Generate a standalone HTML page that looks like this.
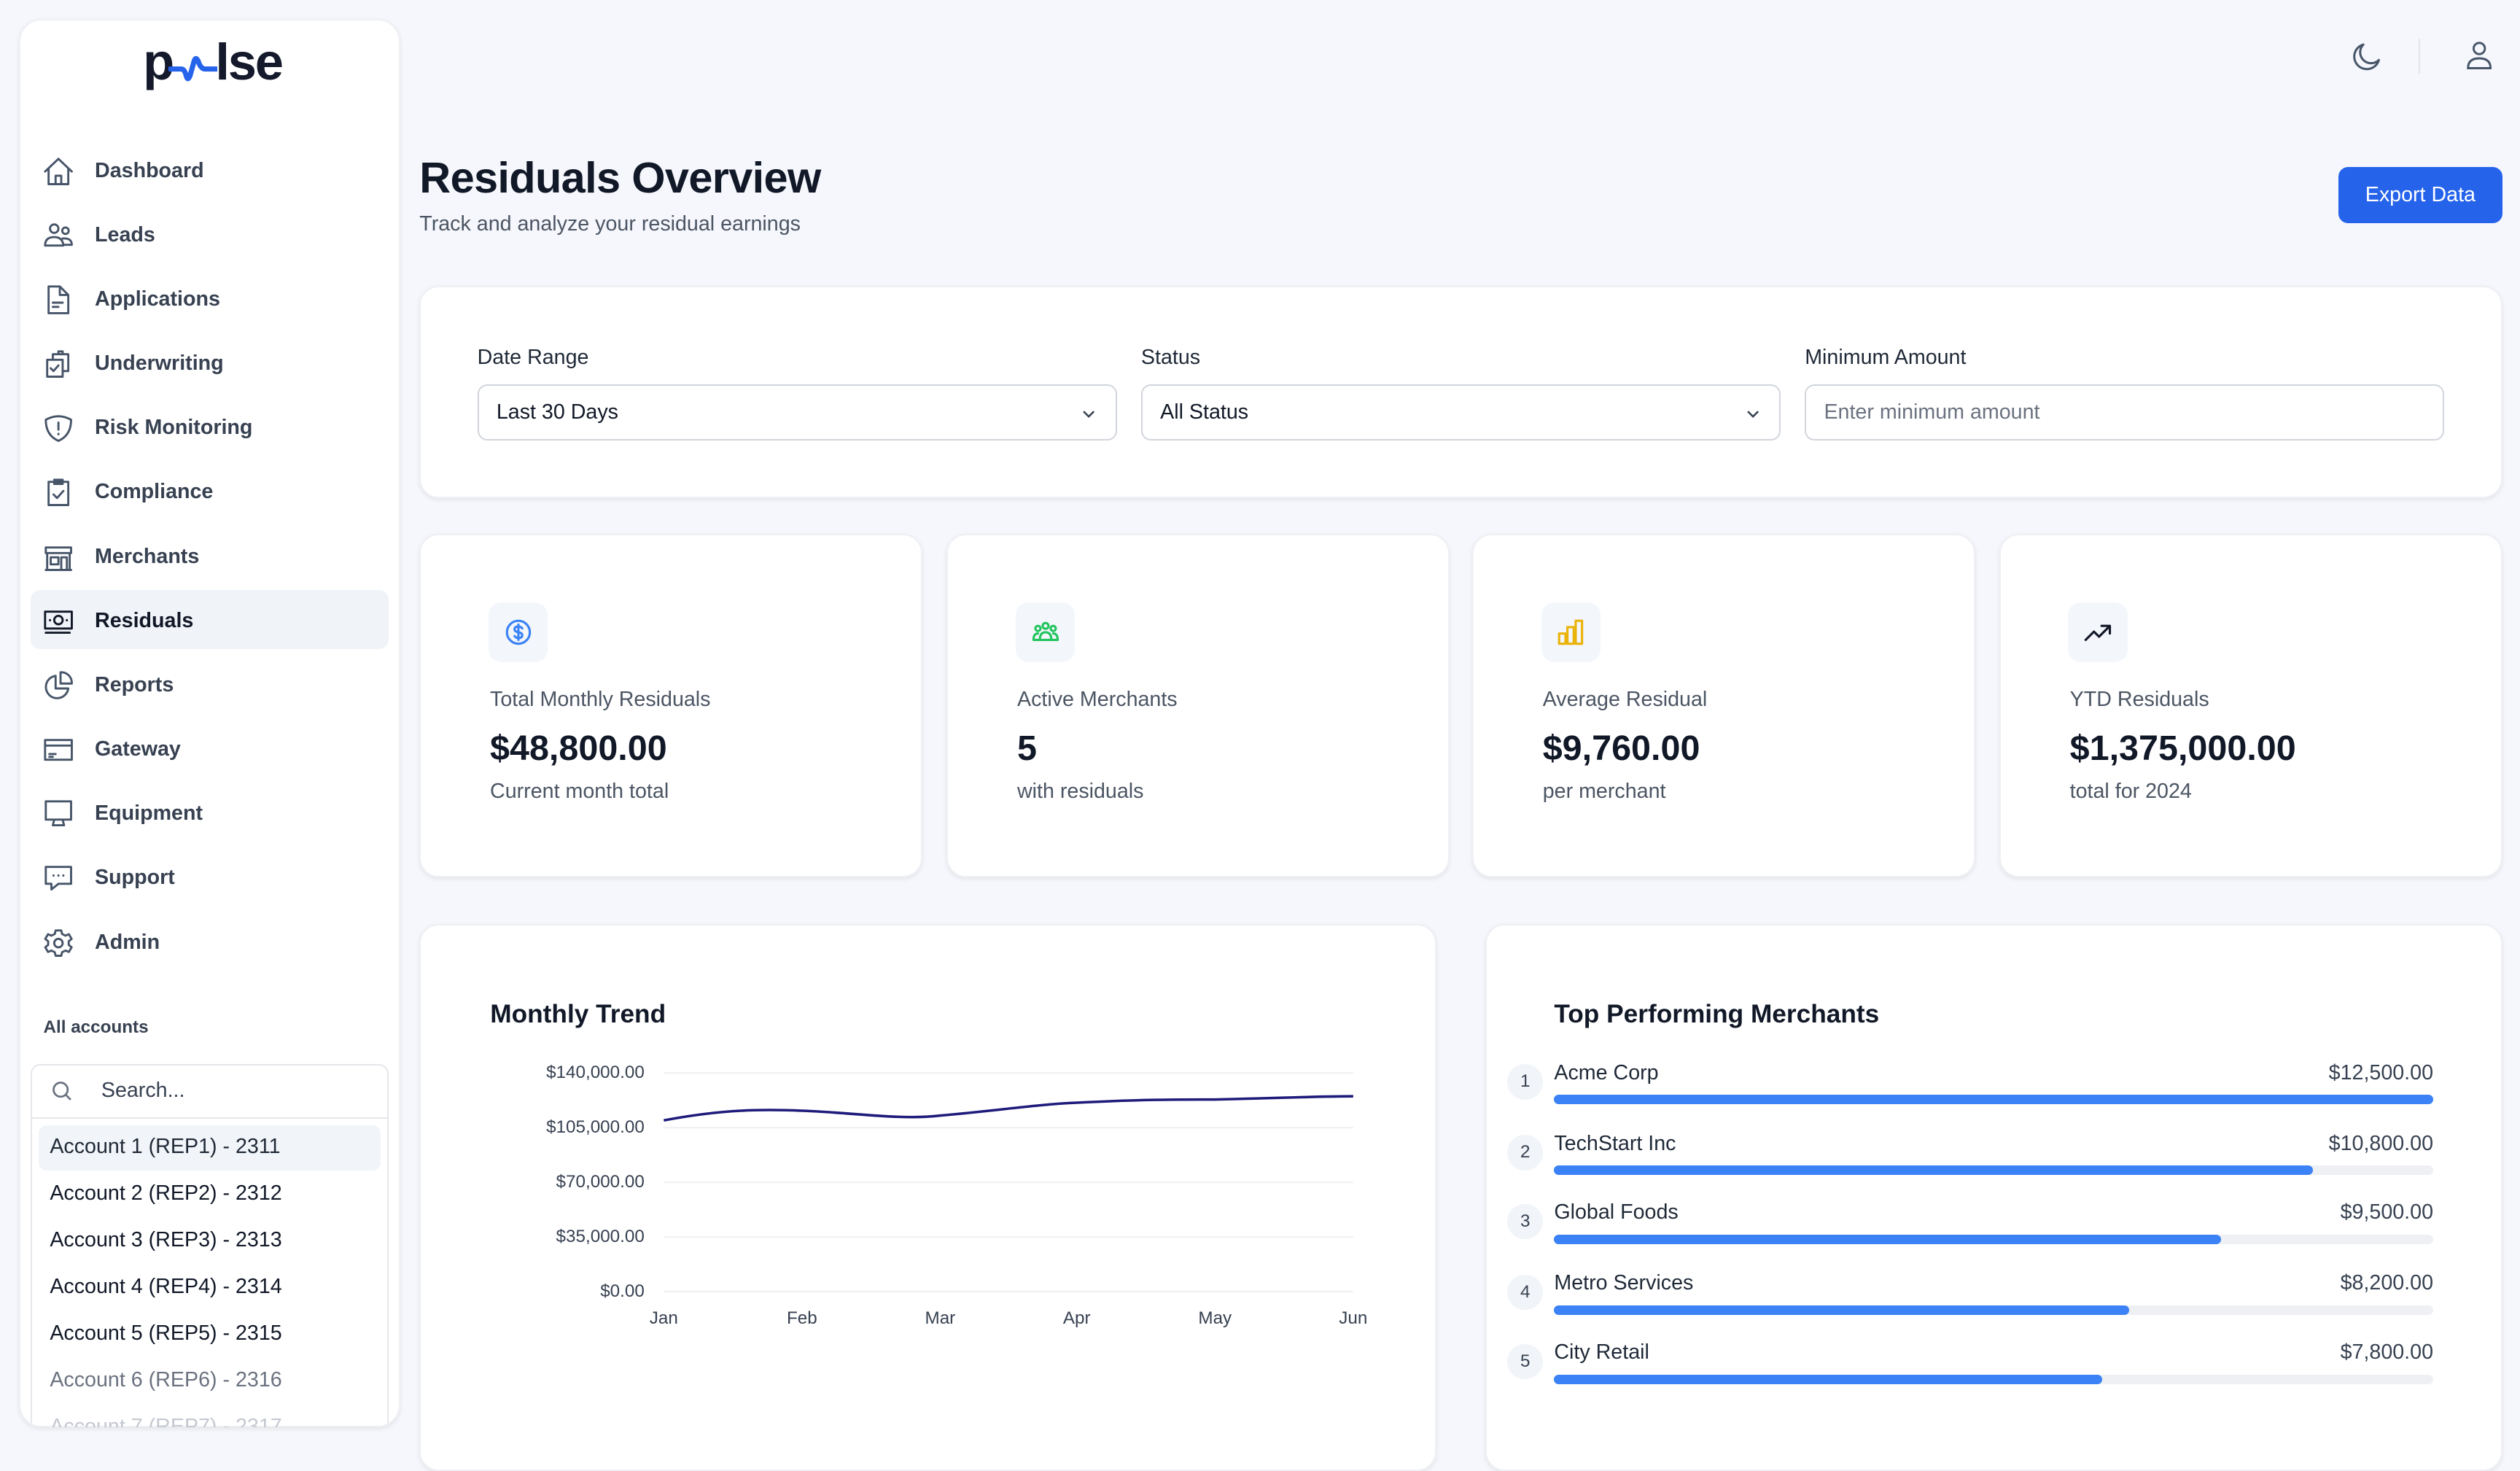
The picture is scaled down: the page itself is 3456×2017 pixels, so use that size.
<!DOCTYPE html>
<html><head><meta charset="utf-8"><style>
*{box-sizing:border-box;margin:0;padding:0}
html,body{width:3456px;height:1984px;overflow:hidden;background:#f5f7fc}
#r{position:absolute;left:0;top:0;width:1568px;height:900px;zoom:2.2041;font-family:"Liberation Sans",Arial,sans-serif;color:#111827}
.a{position:absolute}
.card{position:absolute;background:#fff;border-radius:12px;box-shadow:0 1px 3px rgba(0,0,0,.08);border:1px solid #eef0f4}
.nav{position:absolute;left:26px;font-size:13px;font-weight:bold;color:#374151;height:20px;line-height:20px}
.nav svg{position:absolute;left:0;top:0;width:21px;height:21px;fill:none;stroke:#475569;stroke-width:1.5;stroke-linecap:round;stroke-linejoin:round}
.nav span{position:absolute;left:33px;white-space:nowrap}
.acc{position:absolute;left:31px;font-size:13px;color:#111827;white-space:nowrap}
.lbl{position:absolute;font-size:13px;color:#1f2937;font-weight:500}
.inp{position:absolute;top:239px;height:35px;border:1px solid #d1d5db;border-radius:6px;font-size:13px;padding-left:11px;line-height:33px;color:#111827}
.ic{position:absolute;left:42px;top:42px;width:37px;height:37px;border-radius:8px;background:#f3f6fb}
.ic svg{position:absolute;left:9px;top:9px;width:19px;height:19px;fill:none;stroke-width:1.8;stroke-linecap:round;stroke-linejoin:round}
.sl{position:absolute;left:43px;top:95px;font-size:13px;color:#4b5563}
.sv{position:absolute;left:43px;top:120px;font-size:22px;font-weight:bold;color:#111827}
.ss{position:absolute;left:43px;top:152px;font-size:13px;color:#4b5563}
.yl{position:absolute;right:1167px;font-size:11px;color:#374151;text-align:right}
.xl{position:absolute;top:814px;font-size:11px;color:#374151;width:40px;margin-left:-20px;text-align:center}
.m{position:absolute;left:938px;width:580px;height:40px}
.m .n{position:absolute;left:0;top:0;width:22px;height:22px;border-radius:50%;background:#f1f4f8;font-size:11px;color:#374151;text-align:center;line-height:22px}
.m .t{position:absolute;left:29px;top:-2px;font-size:13px;color:#1f2937}
.m .v{position:absolute;right:4px;top:-2px;font-size:13px;color:#374151}
.m .b{position:absolute;left:29px;top:19px;width:547px;height:6px;border-radius:3px;background:#eef0f4}
.m .b i{position:absolute;left:0;top:0;height:6px;border-radius:3px;background:#3b82f6}
</style></head><body><div id="r">

<div class="card" style="left:12px;top:12px;width:237px;height:876px;border-radius:14px;overflow:hidden">
<div class="a" style="left:6px;top:649px;width:223px;height:240px;border:1px solid #e5e7eb;border-radius:6px;background:#fff"></div>
</div>
<div class="a" style="left:89px;top:20px;font-size:32px;font-weight:bold;color:#141a2b;letter-spacing:-1px">p</div>
<svg class="a" style="left:105px;top:30px" width="30" height="24" viewBox="0 0 30 24"><path d="M1 13 H8 Q10 13 11 17 Q12 21 13.5 17 L16 8 Q17 5 18.5 8 Q20 13 23 13 H30" fill="none" stroke="#2563eb" stroke-width="3.2" stroke-linecap="round"/></svg>
<div class="a" style="left:134px;top:20px;font-size:32px;font-weight:bold;color:#141a2b;letter-spacing:-1px">lse</div>

<div class="a" style="left:19px;top:367px;width:223px;height:37px;background:#f0f3f8;border-radius:6px"></div>
<div class="nav" style="top:96px"><svg viewBox="0 0 24 24"><path d="M2.5 12 L12 3 L21.5 12 M5 10 V21 H19 V10 M10 21 V15 H14 V21"/></svg><span>Dashboard</span></div>
<div class="nav" style="top:136px"><svg viewBox="0 0 24 24"><circle cx="9" cy="7" r="3"/><circle cx="17" cy="8.5" r="2.3"/><path d="M2.5 19 Q2.5 13 9 13 Q15 13 15.5 19 Z M15 14 Q21.5 13.5 21.5 18.5 H16"/></svg><span>Leads</span></div>
<div class="nav" style="top:176px"><svg viewBox="0 0 24 24"><path d="M5 2.5 H13 L19 8.5 V21.5 H5 Z M13 2.5 V8.5 H19 M8 14 H15 M8 17 H12"/></svg><span>Applications</span></div>
<div class="nav" style="top:216px"><svg viewBox="0 0 24 24"><path d="M4 9 H15 V21 H4 Z M8 9 V5 H19 V17 H15 M12 5 V3 H15 V5 M6.5 15 L8.5 17 L12 13"/></svg><span>Underwriting</span></div>
<div class="nav" style="top:256px"><svg viewBox="0 0 24 24"><path d="M3 6 Q12 1 21 6 Q21 17 12 21 Q3 17 3 6 Z M12 8 V13 M12 16 V16.3"/></svg><span>Risk Monitoring</span></div>
<div class="nav" style="top:296px"><svg viewBox="0 0 24 24"><path d="M5 4.5 H19 V21 H5 Z M9 3 H15 V6 H9 Z M8.5 13.5 L11 16 L15.5 11"/></svg><span>Compliance</span></div>
<div class="nav" style="top:336px"><svg viewBox="0 0 24 24"><path d="M3 21 H21 M4 9 V21 M20 9 V21 M3 5 H21 V9 H3 Z M6.5 12 H12 V17 H6.5 Z M14 21 V12 H18 V21"/></svg><span>Merchants</span></div>
<div class="nav" style="top:376px;color:#111827"><svg viewBox="0 0 24 24" style="stroke:#111827"><path d="M2.5 5 H21.5 V17 H2.5 Z M3 20 H20"/><circle cx="12" cy="11" r="3"/><path d="M6 11 V11.2 M18 11 V11.2"/></svg><span>Residuals</span></div>
<div class="nav" style="top:416px"><svg viewBox="0 0 24 24"><path d="M10 5 A8 8 0 1 0 19 14 H10 Z M13.5 2.5 A7.5 7.5 0 0 1 21.5 10.5 H13.5 Z"/></svg><span>Reports</span></div>
<div class="nav" style="top:456px"><svg viewBox="0 0 24 24"><path d="M2.5 5 H21.5 V19 H2.5 Z M2.5 9 H21.5 M5.5 15 H10 M5.5 17 H8"/></svg><span>Gateway</span></div>
<div class="nav" style="top:496px"><svg viewBox="0 0 24 24"><path d="M3 3 H21 V16 H3 Z M9 16 L8 20 H16 L15 16"/></svg><span>Equipment</span></div>
<div class="nav" style="top:536px"><svg viewBox="0 0 24 24"><path d="M3 4 H21 V16 H12 L7 20 V16 H3 Z M8.5 10 V10.2 M12 10 V10.2 M15.5 10 V10.2"/></svg><span>Support</span></div>
<div class="nav" style="top:576px"><svg viewBox="0 0 24 24"><circle cx="12" cy="12" r="3"/><path d="M10 3 H14 L14.6 5.5 L17 6.7 L19.4 5.7 L21.4 9 L19.3 10.7 V13.3 L21.4 15 L19.4 18.3 L17 17.3 L14.6 18.5 L14 21 H10 L9.4 18.5 L7 17.3 L4.6 18.3 L2.6 15 L4.7 13.3 V10.7 L2.6 9 L4.6 5.7 L7 6.7 L9.4 5.5 Z"/></svg><span>Admin</span></div>

<div class="a" style="left:27px;top:633px;font-size:11px;font-weight:bold;color:#374151">All accounts</div>
<div class="a" style="left:20px;top:695px;width:221px;height:1px;background:#e5e7eb"></div>
<svg class="a" style="left:31px;top:671px" width="15" height="15" viewBox="0 0 24 24" fill="none" stroke="#6b7280" stroke-width="2"><circle cx="11" cy="11" r="7"/><path d="M16 16 L21 21"/></svg>
<div class="a" style="left:63px;top:671px;font-size:13px;color:#374151">Search...</div>
<div class="a" style="left:24px;top:700px;width:213px;height:28px;background:#f1f4f8;border-radius:5px"></div>
<div class="acc" style="top:706px;color:#1f2937">Account 1 (REP1) - 2311</div>
<div class="acc" style="top:735px">Account 2 (REP2) - 2312</div>
<div class="acc" style="top:764px">Account 3 (REP3) - 2313</div>
<div class="acc" style="top:793px">Account 4 (REP4) - 2314</div>
<div class="acc" style="top:822px">Account 5 (REP5) - 2315</div>
<div class="acc" style="top:851px;color:#6b7280">Account 6 (REP6) - 2316</div>
<div class="acc" style="top:880px;color:#c4c8d0;height:8px;overflow:hidden">Account 7 (REP7) - 2317</div>

<svg class="a" style="left:1462px;top:24px" width="22" height="22" viewBox="0 0 24 24" fill="none" stroke="#475569" stroke-width="1.5" stroke-linejoin="round"><path d="M20 14.5 A8.5 8.5 0 1 1 9.5 4 A7 7 0 0 0 20 14.5 Z"/></svg>
<div class="a" style="left:1505px;top:24px;width:1px;height:22px;background:#e2e5ea"></div>
<svg class="a" style="left:1532px;top:24px" width="21" height="21" viewBox="0 0 24 24" fill="none" stroke="#475569" stroke-width="1.5"><circle cx="12" cy="7" r="4"/><path d="M4 21 Q4 14 12 14 Q20 14 20 21 Z"/></svg>

<div class="a" style="left:261px;top:95px;font-size:27px;font-weight:bold;color:#111827;letter-spacing:-.3px">Residuals Overview</div>
<div class="a" style="left:261px;top:132px;font-size:13px;color:#4b5563">Track and analyze your residual earnings</div>
<div class="a" style="left:1455px;top:104px;width:102px;height:35px;background:#2563eb;border-radius:6px;color:#fff;font-size:13px;font-weight:500;text-align:center;line-height:35px">Export Data</div>

<div class="card" style="left:261px;top:178px;width:1296px;height:132px"></div>
<div class="lbl" style="left:297px;top:215px">Date Range</div>
<div class="lbl" style="left:710px;top:215px">Status</div>
<div class="lbl" style="left:1123px;top:215px">Minimum Amount</div>
<div class="inp" style="left:297px;width:398px">Last 30 Days<svg class="a" style="right:11px;top:12px" width="11" height="11" viewBox="0 0 24 24" fill="none" stroke="#374151" stroke-width="2.5"><path d="M5 9 L12 16 L19 9"/></svg></div>
<div class="inp" style="left:710px;width:398px">All Status<svg class="a" style="right:11px;top:12px" width="11" height="11" viewBox="0 0 24 24" fill="none" stroke="#374151" stroke-width="2.5"><path d="M5 9 L12 16 L19 9"/></svg></div>
<div class="inp" style="left:1123px;width:398px;color:#6b7280">Enter minimum amount</div>

<div class="card" style="left:261px;top:332px;width:313px;height:214px"><div class="ic"><svg viewBox="0 0 24 24" stroke="#3b82f6"><circle cx="12" cy="12" r="9"/><path d="M15 9 Q14 7.5 12 7.5 Q9 7.5 9 9.7 Q9 11.5 12 12 Q15 12.5 15 14.3 Q15 16.5 12 16.5 Q10 16.5 9 15 M12 6 V18"/></svg></div><div class="sl">Total Monthly Residuals</div><div class="sv">$48,800.00</div><div class="ss">Current month total</div></div>
<div class="card" style="left:589px;top:332px;width:313px;height:214px"><div class="ic"><svg viewBox="0 0 24 24" stroke="#22c55e"><circle cx="12" cy="7" r="2.3"/><circle cx="6" cy="9" r="2"/><circle cx="18" cy="9" r="2"/><path d="M7.5 18 Q7.5 12 12 12 Q16.5 12 16.5 18 Z M2.5 18 Q2.5 13 6 13 M21.5 18 Q21.5 13 18 13 M2.5 18 H21.5"/></svg></div><div class="sl">Active Merchants</div><div class="sv">5</div><div class="ss">with residuals</div></div>
<div class="card" style="left:916px;top:332px;width:313px;height:214px"><div class="ic"><svg viewBox="0 0 24 24" stroke="#eab308"><path d="M3 13 H8 V21 H3 Z M9.5 8 H14.5 V21 H9.5 Z M16 3 H21 V21 H16 Z"/></svg></div><div class="sl">Average Residual</div><div class="sv">$9,760.00</div><div class="ss">per merchant</div></div>
<div class="card" style="left:1244px;top:332px;width:313px;height:214px"><div class="ic"><svg viewBox="0 0 24 24" stroke="#111827" stroke-width="2.2"><path d="M2.5 18 L9 11.5 L13 15.5 L21 7.5 M15 7 H21.5 V13"/></svg></div><div class="sl">YTD Residuals</div><div class="sv">$1,375,000.00</div><div class="ss">total for 2024</div></div>

<div class="card" style="left:261px;top:575px;width:633px;height:340px"></div>
<div class="card" style="left:924px;top:575px;width:633px;height:340px"></div>
<div class="a" style="left:305px;top:622px;font-size:16px;font-weight:bold;color:#111827">Monthly Trend</div>
<div class="a" style="left:967px;top:622px;font-size:16px;font-weight:bold;color:#111827">Top Performing Merchants</div>

<div class="yl" style="top:661px">$140,000.00</div>
<div class="yl" style="top:695px">$105,000.00</div>
<div class="yl" style="top:729px">$70,000.00</div>
<div class="yl" style="top:763px">$35,000.00</div>
<div class="yl" style="top:797px">$0.00</div>
<svg class="a" style="left:0;top:0" width="900" height="900"><g stroke="#eef0f3" stroke-width="1"><path d="M413 667.5 H842 M413 701.5 H842 M413 735.5 H842 M413 769.5 H842 M413 803.5 H842"/></g><path d="M413 697 C450 690 475 690 499 691 C530 692 560 697 585 694 C620 691 645 687 670 686 C710 684 730 684 756 684 C800 683 820 682 842 682" fill="none" stroke="#1e1b7b" stroke-width="1.6"/></svg>
<div class="xl" style="left:413px">Jan</div><div class="xl" style="left:499px">Feb</div><div class="xl" style="left:585px">Mar</div><div class="xl" style="left:670px">Apr</div><div class="xl" style="left:756px">May</div><div class="xl" style="left:842px">Jun</div>

<div class="m" style="top:662px"><div class="n">1</div><div class="t">Acme Corp</div><div class="v">$12,500.00</div><div class="b"><i style="width:547px"></i></div></div>
<div class="m" style="top:706px"><div class="n">2</div><div class="t">TechStart Inc</div><div class="v">$10,800.00</div><div class="b"><i style="width:472px"></i></div></div>
<div class="m" style="top:749px"><div class="n">3</div><div class="t">Global Foods</div><div class="v">$9,500.00</div><div class="b"><i style="width:415px"></i></div></div>
<div class="m" style="top:793px"><div class="n">4</div><div class="t">Metro Services</div><div class="v">$8,200.00</div><div class="b"><i style="width:358px"></i></div></div>
<div class="m" style="top:836px"><div class="n">5</div><div class="t">City Retail</div><div class="v">$7,800.00</div><div class="b"><i style="width:341px"></i></div></div>
</div></body></html>
